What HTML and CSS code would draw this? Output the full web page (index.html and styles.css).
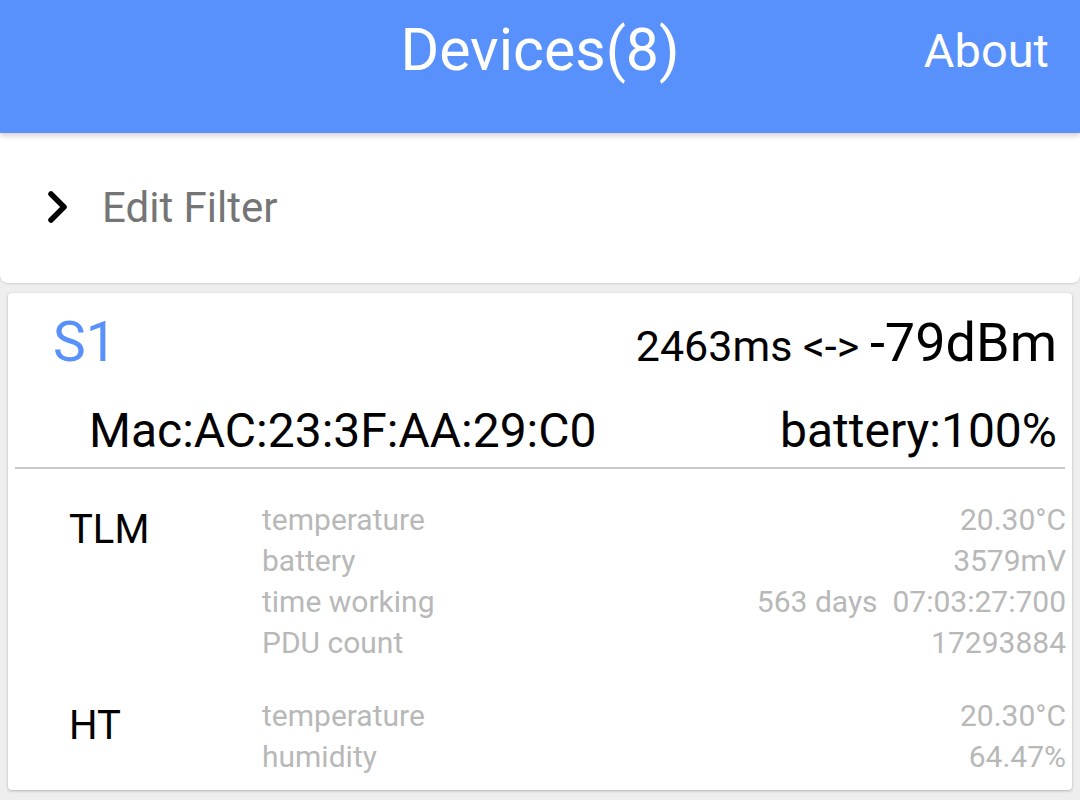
FILE: index.html
```html
<!DOCTYPE html>
<html>
<head>
<meta charset="utf-8">
<link rel="stylesheet" href="styles.css">
</head>
<body>
<header class="appbar">
  <div class="appbar-side"></div>
  <h1 class="appbar-title">Devices(8)</h1>
  <div class="appbar-side appbar-right"><span class="appbar-action">About</span></div>
</header>
<section class="filter-card">
  <svg class="chevron" width="26" height="36" viewBox="0 0 26 36"><path d="M6 5 L19 18 L6 31" fill="none" stroke="#000" stroke-width="5.5" stroke-linecap="round" stroke-linejoin="round"/></svg>
  <span class="filter-label">Edit Filter</span>
</section>
<section class="device-card">
  <div class="device-row top">
    <span class="device-name">S1</span>
    <span class="device-signal"><span class="interval">2463ms &lt;-&gt; </span><span class="rssi">-79dBm</span></span>
  </div>
  <div class="device-row mac">
    <span>Mac:AC:23:3F:AA:29:C0</span>
    <span>battery:100%</span>
  </div>
  <div class="divider"></div>
  <div class="frame">
    <div class="frame-name">TLM</div>
    <div class="frame-rows">
      <div class="kv"><span>temperature</span><span>20.30°C</span></div>
      <div class="kv"><span>battery</span><span>3579mV</span></div>
      <div class="kv"><span>time working</span><span class="pre">563 days  07:03:27:700</span></div>
      <div class="kv"><span>PDU count</span><span>17293884</span></div>
    </div>
  </div>
  <div class="frame ht">
    <div class="frame-name">HT</div>
    <div class="frame-rows">
      <div class="kv"><span>temperature</span><span>20.30°C</span></div>
      <div class="kv"><span>humidity</span><span>64.47%</span></div>
    </div>
  </div>
</section>
</body>
</html>
```
FILE: styles.css
```css
* { box-sizing: border-box; }
html, body { margin: 0; padding: 0; }
body {
  width: 1080px;
  height: 800px;
  overflow: hidden;
  background: #eeeeee;
  font-family: Roboto, "Liberation Sans", sans-serif;
}
.appbar {
  position: relative;
  z-index: 2;
  height: 133px;
  background: #5891fc;
  display: grid;
  grid-template-columns: 1fr auto 1fr;
  align-items: start;
  box-shadow: 0 2px 6px rgba(0, 0, 0, 0.22);
  color: #fff;
}
.appbar-title {
  margin: 20px 0 0;
  font-size: 59px;
  font-weight: 400;
  line-height: 59px;
}
.appbar-right {
  display: flex;
  justify-content: flex-end;
  padding-right: 31px;
}
.appbar-action {
  margin-top: 27px;
  font-size: 47px;
  line-height: 47px;
}
.filter-card {
  height: 150px;
  background: #fff;
  border-radius: 0 0 8px 8px;
  display: flex;
  align-items: center;
  padding-left: 45px;
  box-shadow: 0 1px 2px rgba(0, 0, 0, 0.12);
}
.chevron {
  margin-top: -2px;
}
.filter-label {
  margin-left: 31px;
  font-size: 42px;
  line-height: 42px;
  color: #757575;
}
.device-card {
  margin: 10px 8px 0;
  height: 497px;
  background: #fff;
  border-radius: 4px;
  box-shadow: 0 1px 3px rgba(0, 0, 0, 0.25);
  padding-top: 19px;
}
.device-row {
  display: flex;
  justify-content: space-between;
  align-items: baseline;
  line-height: 60px;
  color: #000;
}
.device-row.top {
  padding: 0 15px 0 45px;
}
.device-name {
  font-size: 55px;
  color: #5891fc;
}
.interval {
  font-size: 43px;
  white-space: pre;
}
.rssi {
  font-size: 54px;
}
.device-row.mac {
  margin-top: 15px;
  padding: 0 15px 0 81px;
  font-size: 48px;
}
.divider {
  margin: 6px 7px 0;
  height: 2px;
  background: #c8c8c8;
}
.frame {
  display: grid;
  grid-template-columns: 193px 1fr;
  padding: 30px 6px 0 61px;
}
.frame.ht {
  padding-top: 32px;
}
.frame-name {
  font-size: 40px;
  line-height: 62px;
  color: #000;
}
.frame-rows {
  display: flex;
  flex-direction: column;
}
.kv {
  display: flex;
  justify-content: space-between;
  font-size: 30px;
  line-height: 41px;
  color: #b8b8b8;
}
.pre {
  white-space: pre;
}
```
